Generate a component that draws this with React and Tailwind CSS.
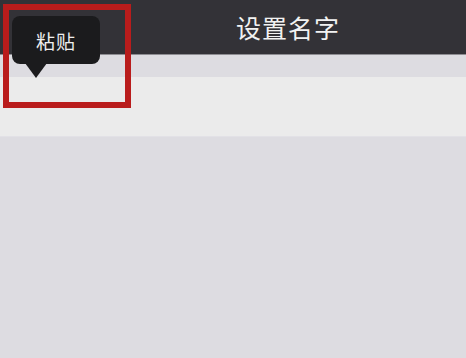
const App = () => {
  return (
    <div
      className="relative w-[466px] h-[358px] overflow-hidden bg-[#dddce1]"
      style={{ fontFamily: '"Noto Sans CJK SC", "Noto Sans", sans-serif' }}
    >
      {/* Nav bar */}
      <header className="h-[55px] bg-[#333237] border-b border-[#8e8d92] flex items-center justify-center pl-[110px]">
        <h1 className="text-[25px] leading-none text-[#f2f2f2] tracking-[1px]">设置名字</h1>
      </header>

      {/* Name input row */}
      <div className="mt-[22px] h-[60px] bg-[#ebebeb] border-b border-[#e2e1e6]" />

      {/* Paste tooltip */}
      <div className="absolute left-[12px] top-[16px] w-[88px] h-[48px] rounded-[8px] bg-[#1b1b1d] flex items-center justify-center">
        <span className="text-[19px] leading-none text-[#eeeeee] tracking-[1px]">粘贴</span>
      </div>
      <div className="absolute left-[25px] top-[63px] w-0 h-0 border-l-[11px] border-r-[11px] border-t-[15px] border-l-transparent border-r-transparent border-t-[#1b1b1d]" />

      {/* Highlight frame */}
      <div className="absolute left-[3px] top-[4px] w-[128px] h-[104px] border-[6px] border-[#b91c1c]" />
    </div>
  );
};

export default App;
